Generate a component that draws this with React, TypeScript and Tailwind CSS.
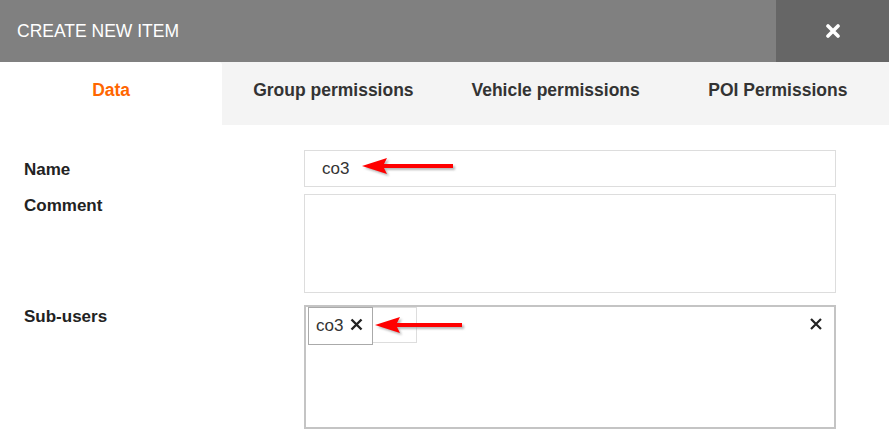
import React from 'react';

const font = { fontFamily: '"Liberation Sans", Arial, sans-serif' };

function Arrow({ className, width }: { className: string; width: number }) {
  // red pointer arrow, tip on the left
  return (
    <svg className={className} width={width + 4} height={22} viewBox={`0 0 ${width + 4} 22`}>
      <defs>
        <filter id="sh" x="-10%" y="-30%" width="130%" height="170%">
          <feGaussianBlur stdDeviation="0.8" />
        </filter>
      </defs>
      <g transform="translate(2 2)" fill="#9a9a9a" opacity="0.7" filter="url(#sh)">
        <path d={`M1 9 L26 1 L23 7 L${width} 7 L${width} 11 L23 11 L26 17 Z`} />
      </g>
      <path d={`M1 9 L26 1 L23 7 L${width} 7 L${width} 11 L23 11 L26 17 Z`} fill="#ff0000" />
    </svg>
  );
}

const tabs = ['Data', 'Group permissions', 'Vehicle permissions', 'POI Permissions'];

export default function App() {
  return (
    <div className="w-[889px] h-[433px] bg-white overflow-hidden relative" style={font}>
      <header className="flex h-[62px]">
        <div className="flex-1 bg-[#808080] flex items-center pl-[17px] text-white text-[17.5px]">
          CREATE NEW ITEM
        </div>
        <button className="w-[113px] bg-[#666666] flex items-center justify-center">
          <svg width="14" height="14" viewBox="0 0 14 14">
            <path d="M2 2 L12 12 M12 2 L2 12" stroke="#fff" strokeWidth="3.6" strokeLinecap="round" />
          </svg>
        </button>
      </header>

      <nav className="grid grid-cols-4 h-[63px] bg-[#f4f4f4]">
        {tabs.map((t, i) => (
          <div
            key={t}
            className={
              'flex items-start justify-center pt-[15px] text-[17.5px] font-bold ' +
              (i === 0 ? 'bg-white text-[#ff6600] rounded-tr-[3px]' : 'text-[#333333]')
            }
          >
            {t}
          </div>
        ))}
      </nav>

      <form className="pt-[25px] flex flex-col">
        <div className="flex">
          <label className="w-[304px] pl-6 pt-[7px] text-[17px] font-bold text-[#222]">Name</label>
          <div className="relative w-[532px] h-[37px] border border-[#dddddd] flex items-center pl-[17px] text-[17px] text-[#333]">
            co3
          </div>
        </div>

        <div className="flex mt-[7px]">
          <label className="w-[304px] pl-6 -mt-[1px] text-[17px] font-bold text-[#222]">Comment</label>
          <div className="w-[532px] h-[99px] border border-[#dddddd]" />
        </div>

        <div className="flex mt-[12px]">
          <label className="w-[304px] pl-6 -mt-[1px] text-[17px] font-bold text-[#222]">Sub-users</label>
          <div className="relative w-[532px] h-[124px] border-2 border-[#c4c4c4] flex items-start pl-[2px] pt-0">
            <div className="h-[38px] w-[65px] border border-[#aaaaaa] flex items-center pl-[7px] gap-[7px] text-[17px] text-[#333]">
              co3
              <svg width="13" height="13" viewBox="0 0 13 13" className="-mt-[3px]">
                <path d="M1.5 1.5 L11.5 11.5 M11.5 1.5 L1.5 11.5" stroke="#222" strokeWidth="2.4" />
              </svg>
            </div>
            <div className="h-[36px] w-[44px] border border-[#dddddd] border-l-0" />
            <svg className="absolute right-[12px] top-[11px]" width="12" height="12" viewBox="0 0 12 12">
              <path d="M1 1 L11 11 M11 1 L1 11" stroke="#222" strokeWidth="2.2" />
            </svg>
          </div>
        </div>
      </form>

      <Arrow className="absolute left-[361px] top-[157px]" width={92} />
      <Arrow className="absolute left-[374px] top-[316px]" width={88} />
    </div>
  );
}
